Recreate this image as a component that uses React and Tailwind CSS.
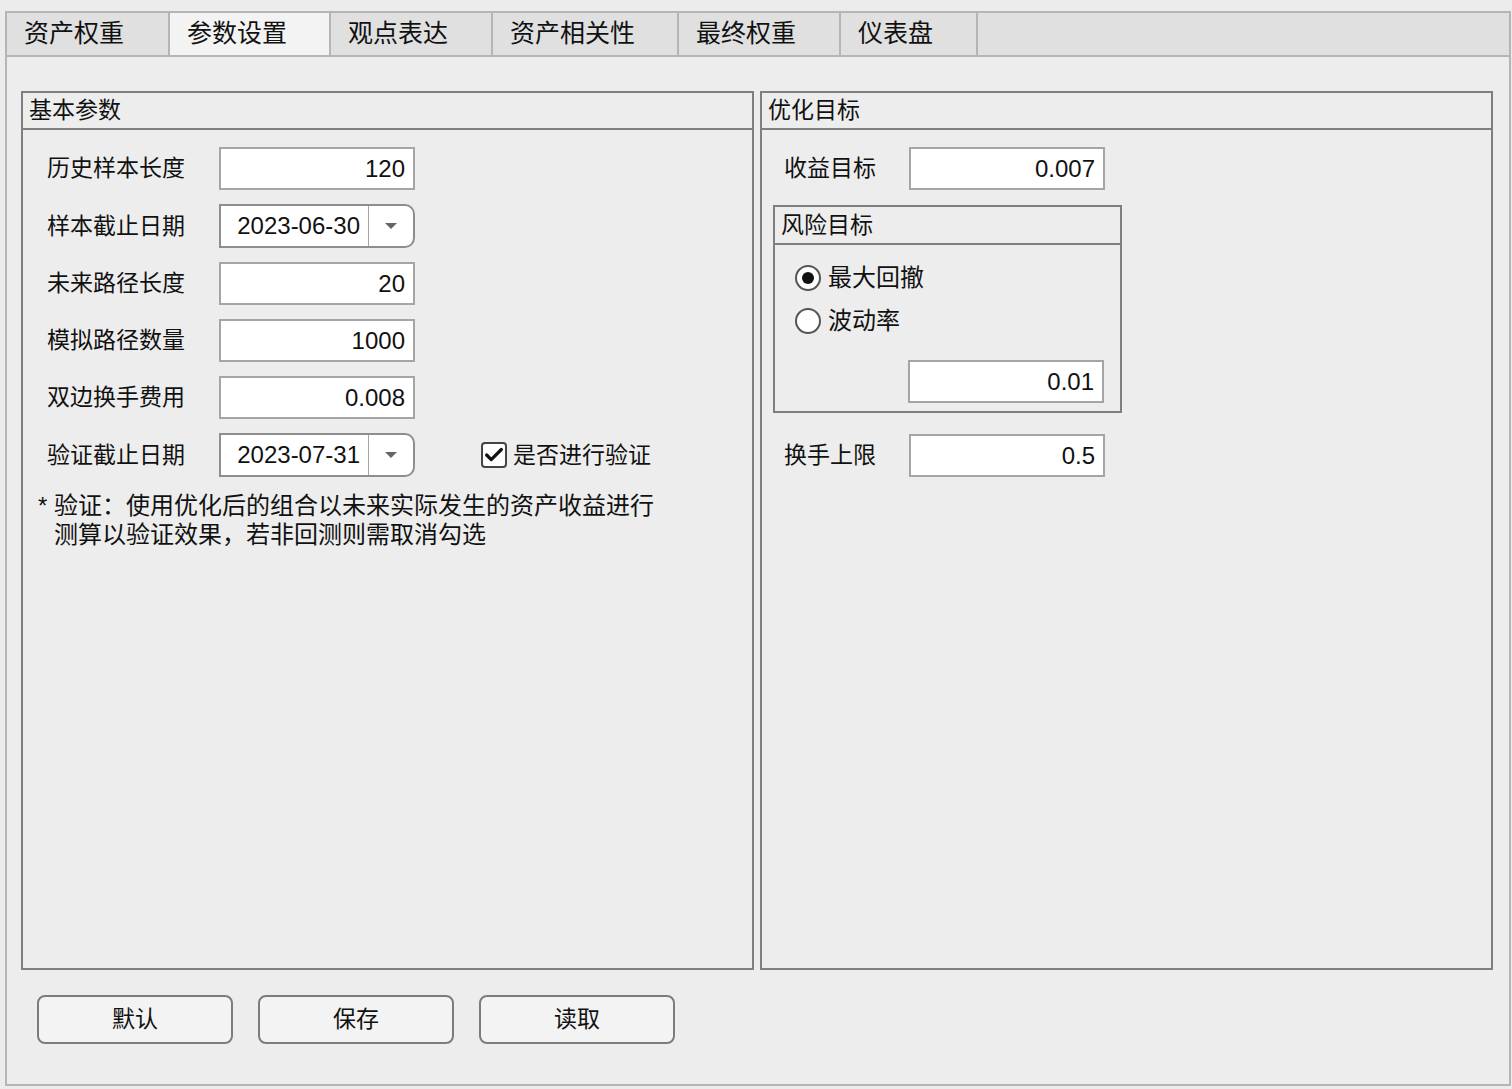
import { Check } from "lucide-react"

const font = { fontFamily: '"Liberation Sans", "Noto Sans CJK SC", sans-serif' }

const tabs = [
  { name: "资产权重", w: "w-[163px]" },
  { name: "参数设置", w: "w-[161px]", active: true },
  { name: "观点表达", w: "w-[162px]" },
  { name: "资产相关性", w: "w-[186px]" },
  { name: "最终权重", w: "w-[162px]" },
  { name: "仪表盘", w: "w-[137px]" },
]

function Field({ value }) {
  return (
    <div className="w-[196px] h-[43px] bg-white border-2 border-[#a5a5a5] flex items-center justify-end pr-[8px] text-[24px] text-[#111]">
      {value}
    </div>
  )
}

function DateBox({ value }) {
  return (
    <div className="w-[196px] h-[44px] bg-white border-2 border-[#8e8e8e] rounded-r-[10px] flex items-center text-[24px] text-[#111]">
      <div className="flex-1 h-full flex items-center justify-end pr-[8px] border-r border-[#a5a5a5]">{value}</div>
      <div className="w-[44px] h-full flex items-center justify-center">
        <svg width="14" height="8" viewBox="0 0 14 8">
          <path d="M1 1 L13 1 L7 7 Z" fill="#666" />
        </svg>
      </div>
    </div>
  )
}

function Row({ label, children, labelW = "w-[172px]" }) {
  return (
    <div className="flex items-center">
      <div className={`${labelW} text-[23px] text-[#111]`}>{label}</div>
      {children}
    </div>
  )
}

function GroupBox({ title, className, children }) {
  return (
    <div className={`border-2 border-[#7f7f7f] flex flex-col ${className}`}>
      <div className="h-[37px] border-b-2 border-[#7f7f7f] flex items-center pl-[6px] text-[23px] text-[#111]">
        {title}
      </div>
      {children}
    </div>
  )
}

function Radio({ checked, label }) {
  return (
    <div className="h-[26px] flex items-center gap-[7px]">
      <div className="w-[26px] h-[26px] rounded-full border-2 border-[#555] bg-white flex items-center justify-center">
        {checked && <div className="w-[12px] h-[12px] rounded-full bg-[#111]" />}
      </div>
      <span className="text-[24px] text-[#111]">{label}</span>
    </div>
  )
}

export default function App() {
  return (
    <div className="w-[1512px] h-[1089px] bg-[#ececec] flex flex-col pt-[11px] pl-[5px] pr-[1px]" style={font}>
      {/* Tabs */}
      <div className="h-[46px] flex border-2 border-[#b5b5b5] bg-[#e0e0e0]">
        {tabs.map((t) => (
          <div
            key={t.name}
            className={`${t.w} h-full flex items-center pl-[17px] text-[25px] text-[#111] border-r-2 border-[#b5b5b5] ${t.active ? "bg-[#f3f3f3]" : "bg-[#e0e0e0]"}`}
          >
            {t.name}
          </div>
        ))}
      </div>

      {/* Panel */}
      <div className="h-[1029px] border-2 border-t-0 border-[#b5b5b5] bg-[#ededed] flex flex-col pt-[34px] pl-[14px] pr-[16px]">
        <div className="h-[879px] flex gap-[6px]">
          <GroupBox title="基本参数" className="w-[733px]">
            <div className="flex flex-col gap-[14px] pt-[17px] pl-[24px]">
              <Row label="历史样本长度"><Field value="120" /></Row>
              <Row label="样本截止日期"><DateBox value="2023-06-30" /></Row>
              <Row label="未来路径长度"><Field value="20" /></Row>
              <Row label="模拟路径数量"><Field value="1000" /></Row>
              <Row label="双边换手费用"><Field value="0.008" /></Row>
              <Row label="验证截止日期">
                <DateBox value="2023-07-31" />
                <div className="ml-[66px] flex items-center gap-[6px]">
                  <div className="w-[26px] h-[26px] rounded-[4px] border-2 border-[#444] bg-white flex items-center justify-center">
                    <Check size={22} strokeWidth={3.5} color="#111" />
                  </div>
                  <span className="text-[23px] text-[#111]">是否进行验证</span>
                </div>
              </Row>
            </div>
            <div className="pl-[15px] pt-[14px] text-[24px] leading-[29px] text-[#111]">
              <div>* 验证：使用优化后的组合以未来实际发生的资产收益进行</div>
              <div className="pl-[16px]">测算以验证效果，若非回测则需取消勾选</div>
            </div>
          </GroupBox>

          <GroupBox title="优化目标" className="flex-1">
            <div className="flex flex-col pt-[17px] pl-[11px]">
              <div className="pl-[11px]">
                <Row label="收益目标" labelW="w-[125px]"><Field value="0.007" /></Row>
              </div>
              <div className="mt-[15px] w-[349px] h-[208px] border-2 border-[#7f7f7f] flex flex-col">
                <div className="h-[38px] border-b-2 border-[#7f7f7f] flex items-center pl-[6px] text-[23px] text-[#111]">
                  风险目标
                </div>
                <div className="flex flex-col gap-[17px] pt-[20px] pl-[20px]">
                  <Radio checked label="最大回撤" />
                  <Radio label="波动率" />
                </div>
                <div className="pl-[133px] pt-[26px]">
                  <Field value="0.01" />
                </div>
              </div>
              <div className="pl-[11px] mt-[21px]">
                <Row label="换手上限" labelW="w-[125px]"><Field value="0.5" /></Row>
              </div>
            </div>
          </GroupBox>
        </div>

        {/* Buttons */}
        <div className="flex gap-[25px] pt-[25px] pl-[16px]">
          {["默认", "保存", "读取"].map((b) => (
            <button
              key={b}
              className="w-[196px] h-[49px] rounded-[8px] border-2 border-[#7c7c7c] bg-[#f3f3f3] text-[23px] text-[#111]"
            >
              {b}
            </button>
          ))}
        </div>
      </div>
    </div>
  )
}
